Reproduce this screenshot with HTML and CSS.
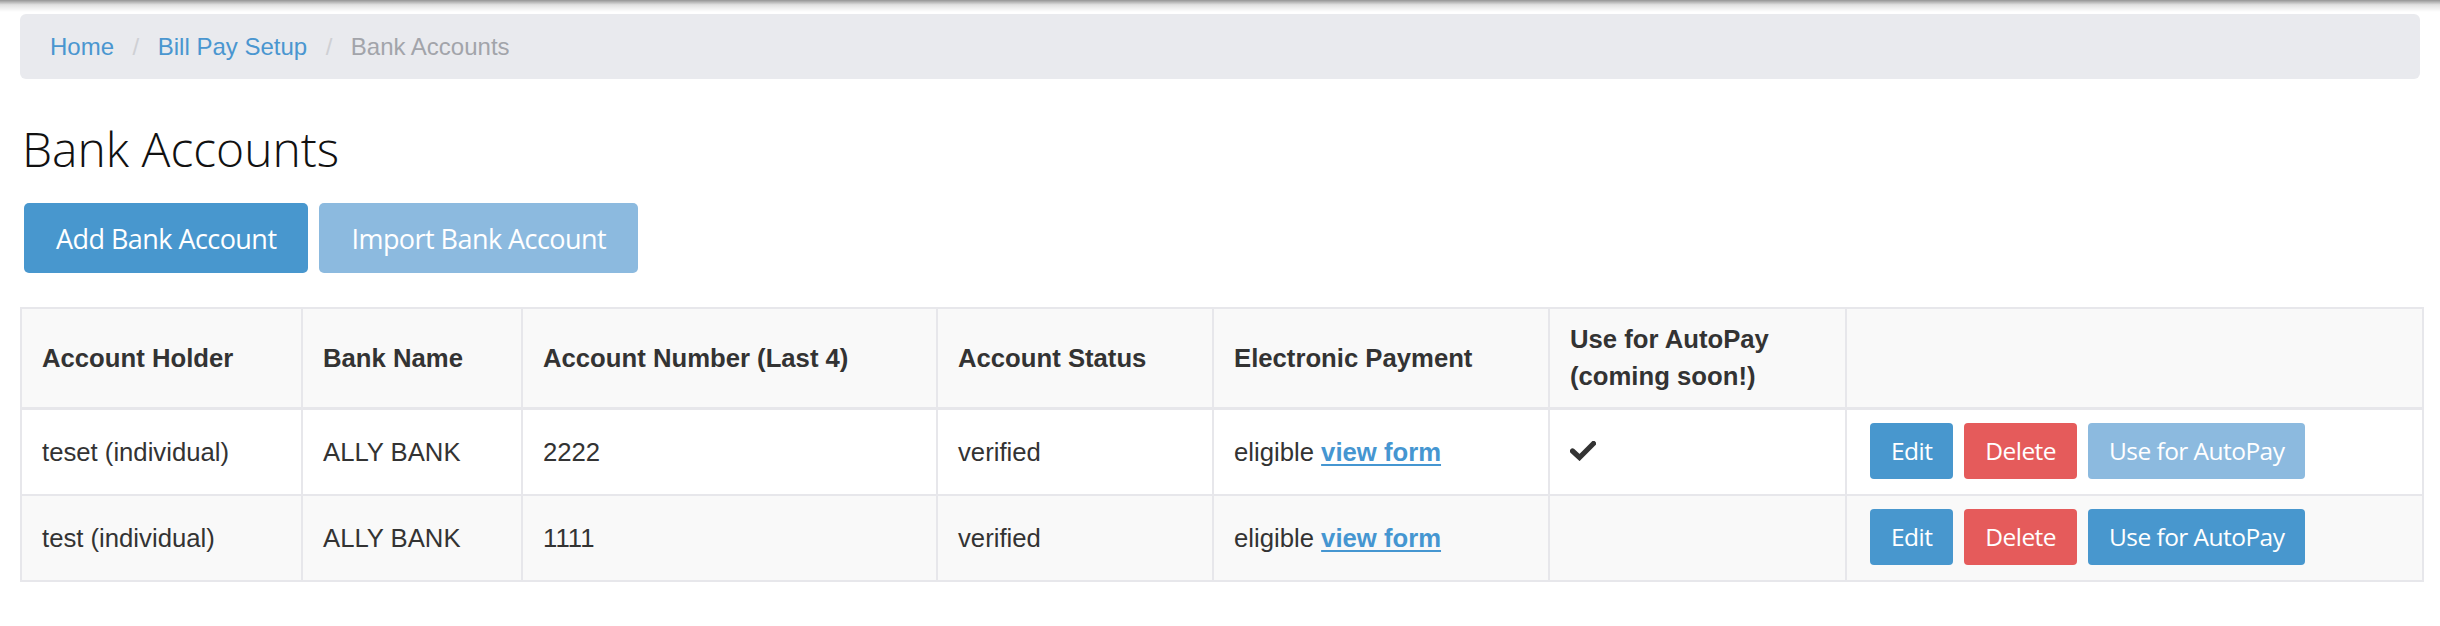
FILE: index.html
```html
<!DOCTYPE html>
<html lang="en">
<head>
<meta charset="utf-8">
<title>Bank Accounts</title>
<link rel="stylesheet" href="styles.css">
</head>
<body>
<div class="topshadow"></div>
<div class="page">
  <nav class="breadcrumb">
    <a href="#" class="crumb-link">Home</a>
    <span class="sep">/</span>
    <a href="#" class="crumb-link">Bill Pay Setup</a>
    <span class="sep">/</span>
    <span class="crumb-active">Bank Accounts</span>
  </nav>

  <h1 class="title">Bank Accounts</h1>

  <div class="actions">
    <button class="btn btn-lg btn-primary">Add Bank Account</button>
    <button class="btn btn-lg btn-primary disabled">Import Bank Account</button>
  </div>

  <table class="accounts">
    <colgroup>
      <col class="c1"><col class="c2"><col class="c3"><col class="c4"><col class="c5"><col class="c6"><col class="c7">
    </colgroup>
    <thead>
      <tr>
        <th>Account Holder</th>
        <th>Bank Name</th>
        <th>Account Number (Last 4)</th>
        <th>Account Status</th>
        <th>Electronic Payment</th>
        <th>Use for AutoPay (coming soon!)</th>
        <th></th>
      </tr>
    </thead>
    <tbody>
      <tr class="row-white">
        <td>teset (individual)</td>
        <td>ALLY BANK</td>
        <td>2222</td>
        <td>verified</td>
        <td>eligible <a href="#" class="form-link">view form</a></td>
        <td><svg class="check" width="26" height="20" viewBox="0 0 26 20"><polyline points="2.5,10 9.5,16.5 23.5,2.5" fill="none" stroke="#333" stroke-width="5.2" stroke-linejoin="miter" stroke-linecap="round"/></svg></td>
        <td class="btn-cell">
          <div class="row-btns">
            <button class="btn btn-sm btn-primary">Edit</button>
            <button class="btn btn-sm btn-danger">Delete</button>
            <button class="btn btn-sm btn-primary disabled">Use for AutoPay</button>
          </div>
        </td>
      </tr>
      <tr class="row-gray">
        <td>test (individual)</td>
        <td>ALLY BANK</td>
        <td>1111</td>
        <td>verified</td>
        <td>eligible <a href="#" class="form-link">view form</a></td>
        <td></td>
        <td class="btn-cell">
          <div class="row-btns">
            <button class="btn btn-sm btn-primary">Edit</button>
            <button class="btn btn-sm btn-danger">Delete</button>
            <button class="btn btn-sm btn-primary">Use for AutoPay</button>
          </div>
        </td>
      </tr>
    </tbody>
  </table>
</div>
</body>
</html>
```

FILE: styles.css
```css
html, body {
  margin: 0;
  padding: 0;
  background: #ffffff;
}

body {
  font-family: "Liberation Sans", Arial, sans-serif;
  color: #333333;
}

.topshadow {
  height: 12px;
  background: linear-gradient(to bottom, rgba(0,0,0,0.42) 0%, rgba(0,0,0,0.12) 40%, rgba(0,0,0,0) 100%);
}

.page {
  padding: 0 20px;
}

.breadcrumb {
  margin-top: 2px;
  height: 65px;
  box-sizing: border-box;
  padding: 1px 30px 0;
  background: #e9eaee;
  border-radius: 6px;
  display: flex;
  align-items: center;
  font-size: 24px;
}

.crumb-link {
  color: #4a96d0;
  text-decoration: none;
}

.sep {
  color: #cfd0d4;
  margin: 0 18.5px;
}

.crumb-active {
  color: #a2a4aa;
}

.title {
  font-family: "Open Sans", sans-serif;
  font-weight: 300;
  font-size: 48px;
  line-height: 54px;
  color: #111;
  margin: 43px 0 27px 2px;
}

.actions {
  display: flex;
  gap: 11px;
  padding-left: 4px;
}

.btn {
  font-family: "Open Sans", sans-serif;
  color: #ffffff;
  border: none;
  display: inline-flex;
  align-items: center;
  justify-content: center;
  cursor: pointer;
}

.btn-lg {
  height: 70px;
  padding: 0 32px;
  font-size: 27px;
  letter-spacing: -0.55px;
  border-radius: 5px;
}

.btn-sm {
  height: 56px;
  padding: 0 21px;
  font-size: 24.5px;
  letter-spacing: -0.55px;
  border-radius: 4px;
}

.btn-primary {
  background: #4897ce;
}

.btn-primary.disabled {
  background: #8cbadf;
}

.btn-danger {
  background: #e55b5b;
}

.accounts {
  margin-top: 34px;
  width: 2402px;
  table-layout: fixed;
  border-collapse: collapse;
  font-size: 25.7px;
  line-height: 37px;
  border: 2px solid #e7e7eb;
}

.c1 { width: 281px; }
.c2 { width: 220px; }
.c3 { width: 415px; }
.c4 { width: 276px; }
.c5 { width: 336px; }
.c6 { width: 297px; }
.c7 { width: 577px; }

.accounts th,
.accounts td {
  border: 2px solid #e7e7eb;
  padding: 14px 20px 13px;
  text-align: left;
  vertical-align: middle;
}

.accounts th {
  font-weight: bold;
  background: #f9f9f9;
  padding: 12px 20px;
  border-bottom-width: 3px;
}

.accounts td.btn-cell {
  padding: 12.5px 20px 15.5px 23px;
}

.row-white td {
  background: #ffffff;
}

.row-gray td {
  background: #f9f9f9;
}

.form-link {
  color: #4596d1;
  font-weight: bold;
  text-decoration: underline;
  text-decoration-thickness: 2px;
  text-underline-offset: 3px;
}

.check {
  display: block;
  margin-top: -4px;
}

.row-btns {
  display: flex;
  gap: 11px;
}
```
